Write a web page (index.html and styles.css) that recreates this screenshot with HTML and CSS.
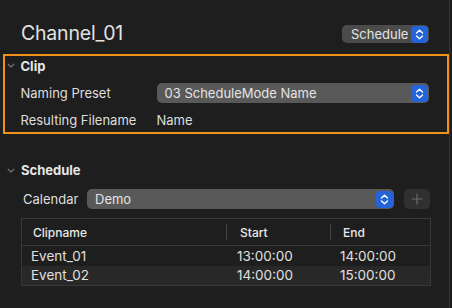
FILE: index.html
```html
<!DOCTYPE html>
<html>
<head>
<meta charset="utf-8">
<link rel="stylesheet" href="styles.css">
</head>
<body>
<div class="panel">
  <div class="header">
    <div class="title">Channel_01</div>
    <div class="popup popup-small">
      <span class="popup-text">Schedule</span>
      <svg class="stepper" width="17" height="17" viewBox="0 0 17 17"><rect x="0" y="0" width="17" height="17" rx="4" fill="#2563d9"/><path d="M5.5 7 L8.5 4.2 L11.5 7" fill="none" stroke="#fff" stroke-width="1.4" stroke-linecap="round" stroke-linejoin="round"/><path d="M5.5 10 L8.5 12.8 L11.5 10" fill="none" stroke="#fff" stroke-width="1.4" stroke-linecap="round" stroke-linejoin="round"/></svg>
    </div>
  </div>

  <div class="clip">
    <div class="section-head">
      <svg class="chev" width="8" height="5" viewBox="0 0 8 5"><path d="M0.8 0.8 L4 4 L7.2 0.8" fill="none" stroke="#7d7d7d" stroke-width="1.1"/></svg>
      <span class="section-title">Clip</span>
    </div>
    <div class="form">
      <div class="label">Naming Preset</div>
      <div class="popup popup-wide">
        <span class="popup-text">03 ScheduleMode Name</span>
        <svg class="stepper" width="17" height="17" viewBox="0 0 17 17"><rect x="0" y="0" width="17" height="17" rx="4" fill="#2563d9"/><path d="M5.5 7 L8.5 4.2 L11.5 7" fill="none" stroke="#fff" stroke-width="1.4" stroke-linecap="round" stroke-linejoin="round"/><path d="M5.5 10 L8.5 12.8 L11.5 10" fill="none" stroke="#fff" stroke-width="1.4" stroke-linecap="round" stroke-linejoin="round"/></svg>
      </div>
      <div class="label row2">Resulting Filename</div>
      <div class="value row2">Name</div>
    </div>
  </div>

  <div class="schedule">
    <div class="section-head">
      <svg class="chev" width="8" height="5" viewBox="0 0 8 5"><path d="M0.8 0.8 L4 4 L7.2 0.8" fill="none" stroke="#7d7d7d" stroke-width="1.1"/></svg>
      <span class="section-title">Schedule</span>
    </div>
    <div class="cal-row">
      <span class="cal-label">Calendar</span>
      <div class="popup popup-cal">
        <span class="popup-text">Demo</span>
        <svg class="stepper" width="17" height="17" viewBox="0 0 17 17"><rect x="0" y="0" width="17" height="17" rx="4" fill="#2563d9"/><path d="M5.5 7 L8.5 4.2 L11.5 7" fill="none" stroke="#fff" stroke-width="1.4" stroke-linecap="round" stroke-linejoin="round"/><path d="M5.5 10 L8.5 12.8 L11.5 10" fill="none" stroke="#fff" stroke-width="1.4" stroke-linecap="round" stroke-linejoin="round"/></svg>
      </div>
      <div class="add-btn">
        <svg width="12" height="12" viewBox="0 0 12 12"><path d="M6 0.5 V11.5 M0.5 6 H11.5" stroke="#6a6a6a" stroke-width="1.2"/></svg>
      </div>
    </div>
    <div class="table">
      <div class="thead">
        <div class="th c1">Clipname</div>
        <div class="th c2">Start</div>
        <div class="th c3">End</div>
      </div>
      <div class="tr">
        <div class="td c1">Event_01</div>
        <div class="td c2">13:00:00</div>
        <div class="td c3">14:00:00</div>
      </div>
      <div class="tr alt">
        <div class="td c1">Event_02</div>
        <div class="td c2">14:00:00</div>
        <div class="td c3">15:00:00</div>
      </div>
    </div>
  </div>
</div>
</body>
</html>
```

FILE: styles.css
```css
* { box-sizing: border-box; }
html, body {
  margin: 0;
  padding: 0;
  background: #1e1e1e;
  width: 452px;
  height: 308px;
  overflow: hidden;
}
body {
  font-family: Inter, "Noto Sans", sans-serif;
  color: #dedede;
  font-size: 13px;
}
.panel {
  width: 450px;
  height: 308px;
  border-right: 1px solid #353535;
}
.header {
  display: flex;
  justify-content: space-between;
  align-items: center;
  height: 54px;
  padding: 14px 20px 0 21px;
}
.title {
  font-size: 19.5px;
  color: #e2e2e2;
  letter-spacing: -0.2px;
  margin-top: -2px;
}
.popup {
  display: flex;
  align-items: center;
  justify-content: space-between;
  background: #595959;
  border-radius: 5px;
  padding: 0 1px 0 8px;
  color: #e4e4e4;
}
.popup-small {
  width: 87px;
  height: 18px;
  background: #4b4b4b;
  padding-left: 9px;
}
.popup-wide {
  height: 20px;
  width: 272px;
}
.popup-cal {
  height: 20px;
  width: 307px;
}
.popup-text { line-height: 16px; }
.stepper { display: block; flex: none; }

.clip {
  margin-left: 3px;
  width: 446px;
  height: 80px;
  border: 2.5px solid #f2901a;
}
.section-head {
  display: flex;
  align-items: center;
  height: 18px;
}
.chev { display: block; margin-right: 6px; }
.section-title {
  font-weight: 700;
  font-size: 13px;
  color: #e6e6e6;
}
.clip .section-head { margin-top: 0.5px; padding-left: 1.5px; }
.form {
  display: grid;
  grid-template-columns: 136px 272px;
  grid-template-rows: 20px 20px;
  row-gap: 7px;
  margin-top: 8.5px;
  padding-left: 15.5px;
}
.label, .value {
  display: flex;
  align-items: center;
}

.schedule { padding-top: 27px; }
.schedule .section-head { padding-left: 7px; }
.cal-row {
  display: flex;
  align-items: center;
  height: 20px;
  margin-top: 10px;
  padding-left: 23px;
}
.cal-label { width: 64px; }
.add-btn {
  width: 26px;
  height: 20px;
  margin-left: 10px;
  background: #303030;
  border-radius: 5px;
  display: flex;
  align-items: center;
  justify-content: center;
}
.add-btn svg { display: block; }

.table {
  margin: 9px 0 0 21px;
  width: 410px;
  border: 1px solid #383838;
}
.thead {
  display: flex;
  height: 27px;
  border-bottom: 1px solid #383838;
  align-items: center;
}
.th {
  font-size: 12px;
  font-weight: 500;
  color: #e8e8e8;
  height: 16px;
  display: flex;
  align-items: center;
}
.c1 { width: 204px; }
.c2 { width: 104px; }
.c3 { flex: 1; }
.th.c1 { padding-left: 11px; }
.th.c2 { padding-left: 13px; border-left: 1px solid #454545; }
.th.c3 { padding-left: 12px; border-left: 1px solid #454545; }
.tr {
  display: flex;
  height: 19.5px;
  align-items: center;
}
.tr.alt { background: #282828; }
.td { font-size: 13.5px; color: #e0e0e0; }
.td.c1 { padding-left: 9px; }
.td.c2 { padding-left: 11px; }
.td.c3 { padding-left: 10px; }
```
